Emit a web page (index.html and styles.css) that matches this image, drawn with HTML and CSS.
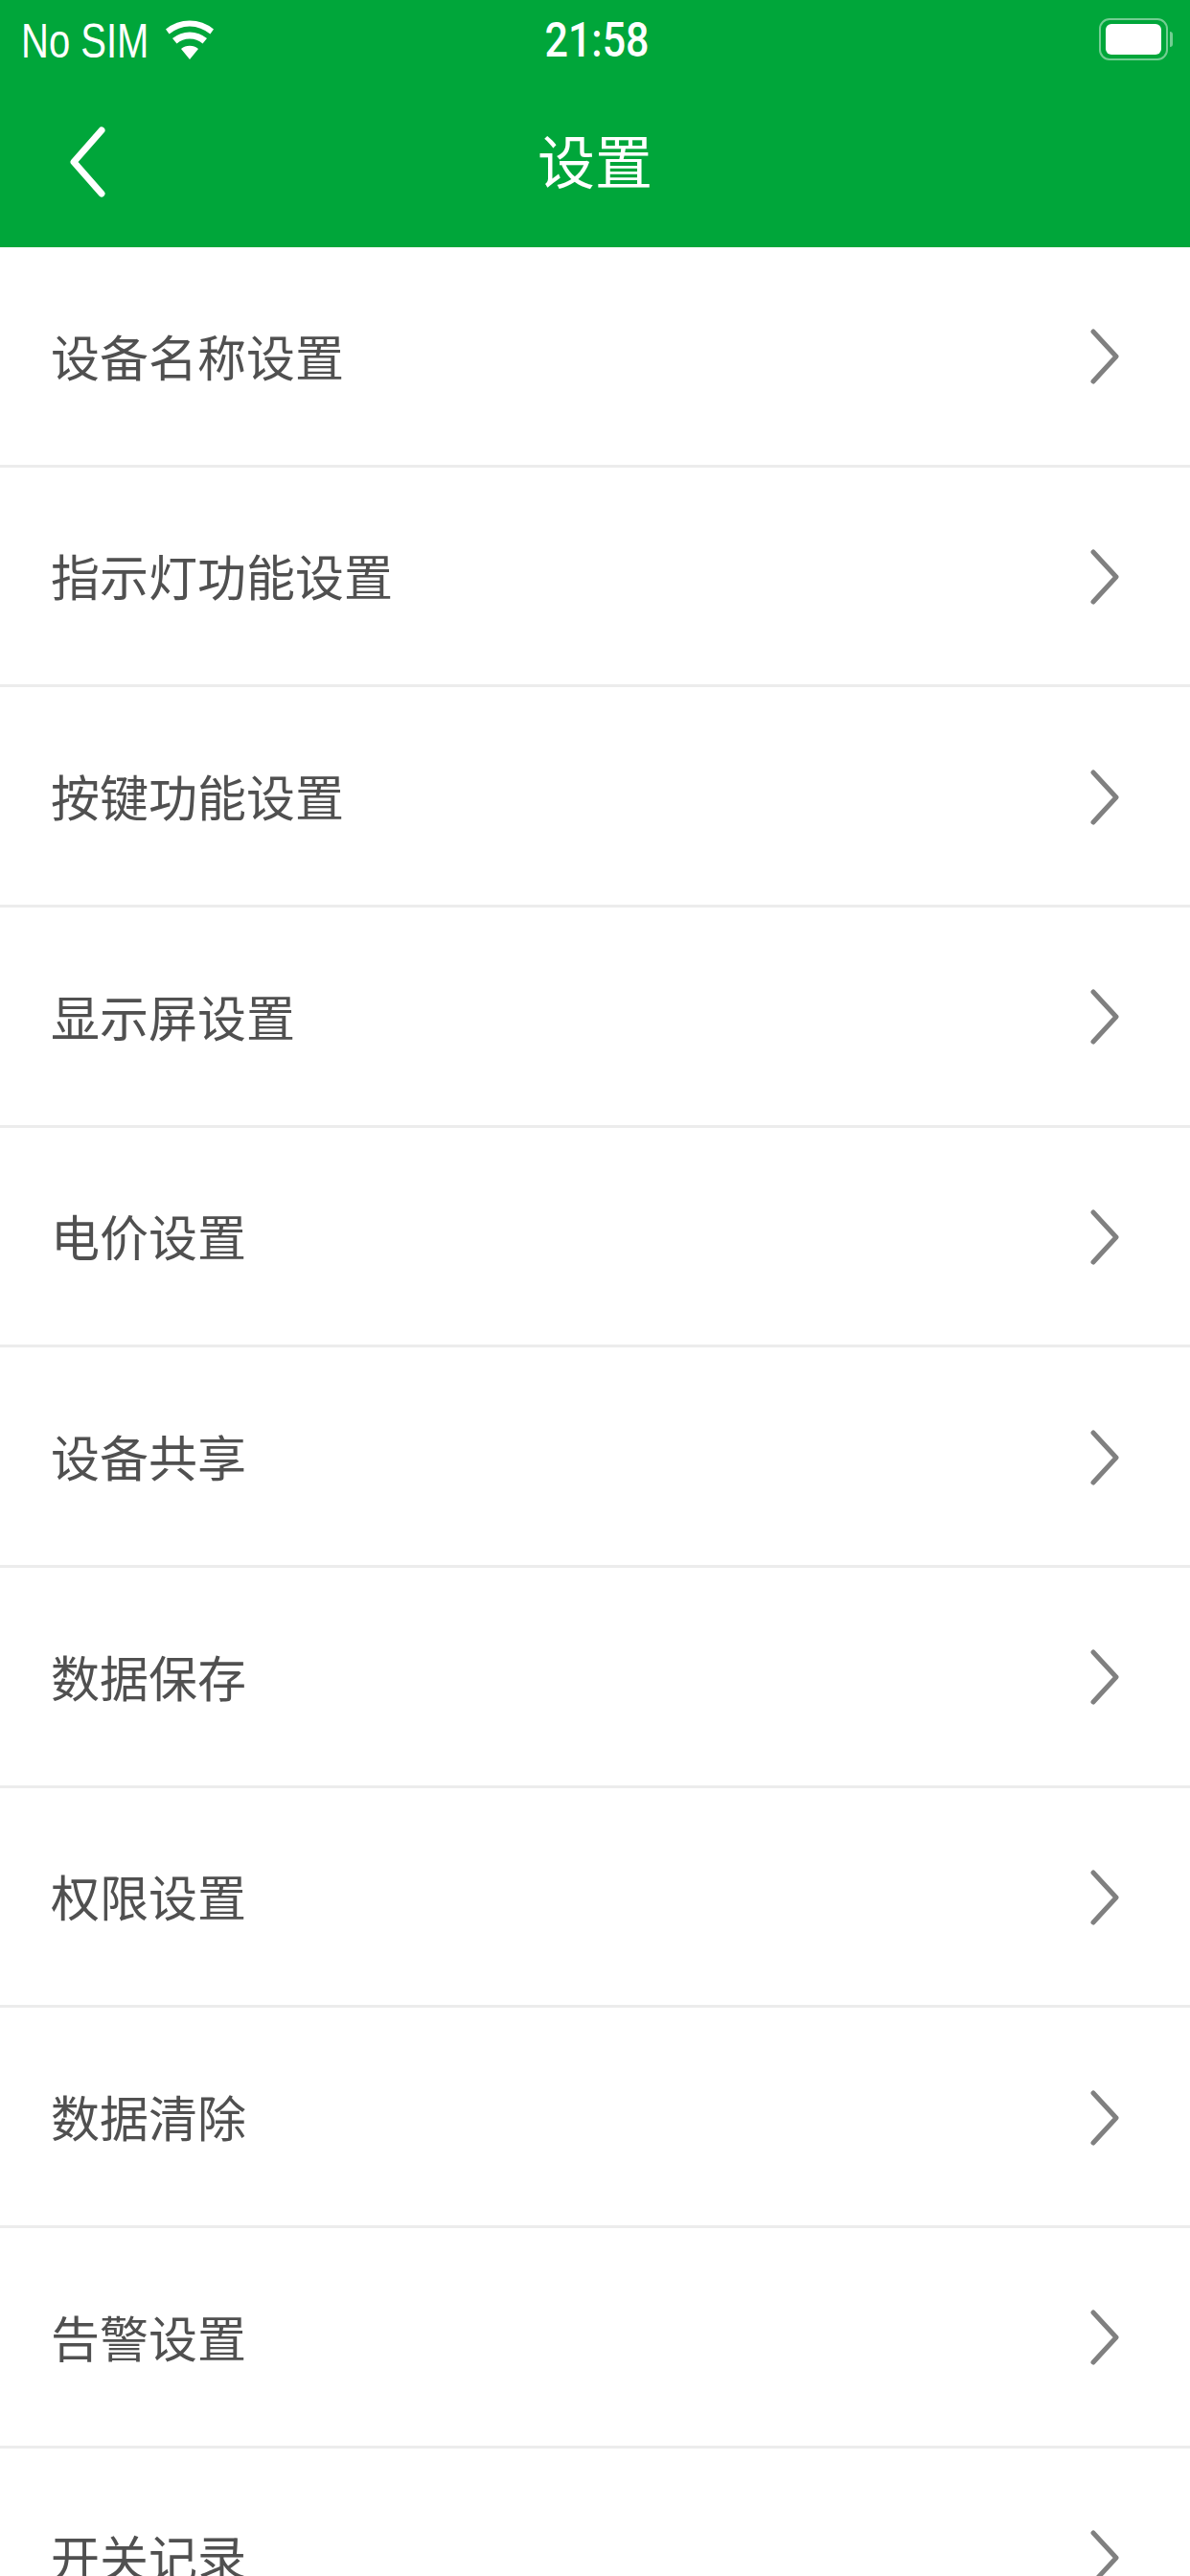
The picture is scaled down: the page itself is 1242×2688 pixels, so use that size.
FILE: index.html
```html
<!DOCTYPE html>
<html lang="zh-CN">
<head>
<meta charset="utf-8">
<title>设置</title>
<link rel="stylesheet" href="styles.css">
</head>
<body>
<div class="page">
  <header class="header">
    <div class="status">
      <div class="status-left">
        <span class="carrier">No SIM</span>
        <svg class="wifi" viewBox="0 0 50 46" aria-hidden="true"><path d="M25 46 L16 35 A14 14 0 0 1 34 35 Z M11.5 29.5 L7 24 A28 28 0 0 1 43 24 L38.5 29.5 A21 21 0 0 0 11.5 29.5 Z M3.6 19.5 L0 14.5 A39 39 0 0 1 50 14.5 L46.4 19.5 A33 33 0 0 0 3.6 19.5 Z" fill="#fff"/></svg>
      </div>
      <span class="time">21:58</span>
      <div class="battery">
        <div class="battery-shell"><div class="battery-fill"></div></div>
        <div class="battery-cap"></div>
      </div>
    </div>
    <nav class="nav">
      <svg class="back" viewBox="0 0 37 74" aria-hidden="true"><path d="M33 4 L4 37 L33 70" fill="none" stroke="#fff" stroke-width="7" stroke-linecap="round" stroke-linejoin="round"/></svg>
      <h1 class="title">设置</h1>
    </nav>
  </header>
  <ul class="list">
    <li class="row"><span class="label">设备名称设置</span><svg class="chev" viewBox="0 0 30 58"><path d="M3 3 L27 29 L3 55"/></svg></li>
    <li class="row"><span class="label">指示灯功能设置</span><svg class="chev" viewBox="0 0 30 58"><path d="M3 3 L27 29 L3 55"/></svg></li>
    <li class="row"><span class="label">按键功能设置</span><svg class="chev" viewBox="0 0 30 58"><path d="M3 3 L27 29 L3 55"/></svg></li>
    <li class="row"><span class="label">显示屏设置</span><svg class="chev" viewBox="0 0 30 58"><path d="M3 3 L27 29 L3 55"/></svg></li>
    <li class="row"><span class="label">电价设置</span><svg class="chev" viewBox="0 0 30 58"><path d="M3 3 L27 29 L3 55"/></svg></li>
    <li class="row"><span class="label">设备共享</span><svg class="chev" viewBox="0 0 30 58"><path d="M3 3 L27 29 L3 55"/></svg></li>
    <li class="row"><span class="label">数据保存</span><svg class="chev" viewBox="0 0 30 58"><path d="M3 3 L27 29 L3 55"/></svg></li>
    <li class="row"><span class="label">权限设置</span><svg class="chev" viewBox="0 0 30 58"><path d="M3 3 L27 29 L3 55"/></svg></li>
    <li class="row"><span class="label">数据清除</span><svg class="chev" viewBox="0 0 30 58"><path d="M3 3 L27 29 L3 55"/></svg></li>
    <li class="row"><span class="label">告警设置</span><svg class="chev" viewBox="0 0 30 58"><path d="M3 3 L27 29 L3 55"/></svg></li>
    <li class="row"><span class="label">开关记录</span><svg class="chev" viewBox="0 0 30 58"><path d="M3 3 L27 29 L3 55"/></svg></li>
  </ul>
</div>
</body>
</html>
```
FILE: styles.css
```css
* { box-sizing: border-box; }
html, body { margin: 0; padding: 0; background: #fff; }
.page {
  width: 1242px;
  height: 2688px;
  overflow: hidden;
  font-family: "Noto Sans CJK SC", "Liberation Sans", sans-serif;
}
.header {
  height: 258px;
  background: #00a63a;
  color: #fff;
  display: flex;
  flex-direction: column;
}
.status {
  height: 84px;
  padding: 0 18px 0 22px;
  display: grid;
  grid-template-columns: 1fr auto 1fr;
  align-items: center;
}
.status-left { display: flex; align-items: center; gap: 18px; }
.carrier {
  font: 400 40px/1 "Liberation Sans", sans-serif;
  transform: scaleY(1.25);
}
.wifi { width: 50px; height: 46px; margin-top: -6px; }
.time {
  font: 500 43px/1 Roboto, sans-serif;
  transform: scaleY(1.16);
}
.battery { justify-self: end; display: flex; align-items: center; gap: 2px; margin-top: -2px; }
.battery-shell {
  width: 72px;
  height: 44px;
  padding: 4px 5px;
  border: 2px solid rgba(255, 255, 255, .45);
  border-radius: 11px;
}
.battery-fill { width: 100%; height: 100%; background: #fff; border-radius: 6px; }
.battery-cap { width: 3px; height: 16px; background: rgba(255, 255, 255, .45); border-radius: 0 3px 3px 0; }
.nav {
  flex: 1;
  position: relative;
  display: flex;
  align-items: center;
  justify-content: center;
  padding-bottom: 10px;
}
.back { position: absolute; left: 73px; top: 48px; width: 37px; height: 74px; }
.title { margin: 0; font-size: 60px; font-weight: 400; line-height: 1; }
.list { margin: 0; padding: 0; list-style: none; }
.row {
  height: 229.67px;
  padding: 0 74px 0 53px;
  display: flex;
  align-items: center;
  justify-content: space-between;
  border-bottom: 3px solid #ececec;
}
.label { font-size: 51px; font-weight: 400; line-height: 1; color: #505050; }
.chev { width: 30px; height: 58px; margin-top: 2px; }
.chev path { fill: none; stroke: #808080; stroke-width: 5; stroke-linecap: round; stroke-linejoin: round; }
```
